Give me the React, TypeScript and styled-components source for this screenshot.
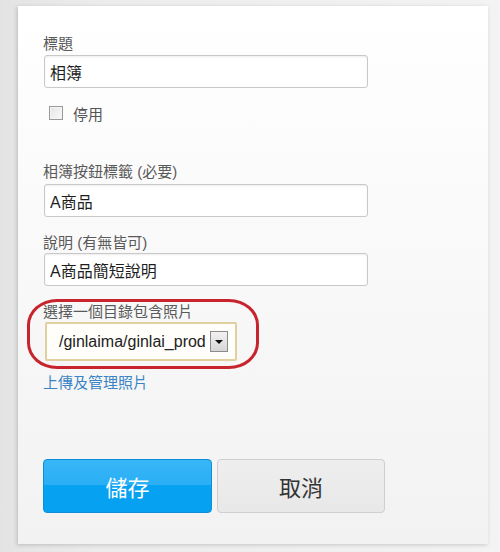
import styled, { createGlobalStyle } from "styled-components";

const GlobalStyle = createGlobalStyle`
  html, body {
    margin: 0;
    padding: 0;
  }
  body {
    width: 500px;
    height: 552px;
    overflow: hidden;
    background: linear-gradient(90deg, #e3e3e3 0%, #ececec 20%, #f3f3f3 100%);
    font-family: "Liberation Sans", "Noto Sans CJK TC", sans-serif;
  }
`;

const Page = styled.div`
  padding: 6px 12px 0 18px;
`;

const Panel = styled.form`
  box-sizing: border-box;
  width: 470px;
  height: 538px;
  padding: 29px 0 0 25px;
  display: flex;
  flex-direction: column;
  align-items: flex-start;
  background: linear-gradient(180deg, #ffffff 0%, #f9f9f9 45%, #f2f2f2 100%);
  box-shadow: -1px 1px 4px rgba(0, 0, 0, 0.18);
`;

const Label = styled.label<{ $top: number }>`
  display: block;
  margin-top: ${(p) => p.$top}px;
  font-size: 15px;
  line-height: 18px;
  color: #5a5a5a;
`;

const TextInput = styled.input<{ $top: number }>`
  box-sizing: border-box;
  width: 324px;
  height: 33px;
  margin: ${(p) => p.$top}px 0 0 1px;
  padding: 0 5px;
  font-family: "Liberation Sans", "Noto Sans CJK TC", sans-serif;
  font-size: 16px;
  color: #1e1e1e;
  background: #fff;
  border: 1px solid #c9c9c9;
  border-radius: 3px;
  box-shadow: inset 0 1px 2px rgba(0, 0, 0, 0.08);
  outline: none;
`;

const CheckRow = styled.div`
  display: flex;
  align-items: center;
  gap: 10px;
  margin: 16px 0 0 6px;
  height: 18px;
  font-size: 15px;
  color: #555;
`;

const Box = styled.span`
  box-sizing: border-box;
  width: 14px;
  height: 14px;
  border: 1px solid #9a9a9a;
  background: linear-gradient(135deg, #e4e4e4, #fafafa);
  box-shadow: inset 0 0 0 1px #f4f4f4;
`;

const Circled = styled.div`
  position: relative;
  margin-top: 17px;
  &::after {
    content: "";
    position: absolute;
    left: -16px;
    top: -4px;
    width: 232px;
    height: 70px;
    box-sizing: border-box;
    border: 3px solid #c8242e;
    border-radius: 30px / 26px;
    pointer-events: none;
  }
`;

const SelectBox = styled.div`
  box-sizing: border-box;
  display: flex;
  align-items: center;
  justify-content: space-between;
  width: 192px;
  height: 39px;
  margin: 1px 0 0 2px;
  padding: 0 7px 0 12px;
  border: 2px solid #e2cf9e;
  border-radius: 2px;
  background: #fffefb;
  font-size: 16px;
  color: #222;
`;

const ArrowButton = styled.span`
  box-sizing: border-box;
  display: flex;
  align-items: center;
  justify-content: center;
  width: 18px;
  height: 21px;
  border: 1px solid #8c8c8c;
  background: linear-gradient(180deg, #f2f2f2, #d6d6d6);
`;

const Arrow = styled.span`
  width: 0;
  height: 0;
  border-left: 4px solid transparent;
  border-right: 4px solid transparent;
  border-top: 4px solid #111;
  margin-top: 1px;
`;

const ManageLink = styled.a`
  display: block;
  margin-top: 13px;
  font-size: 15px;
  line-height: 18px;
  color: #3a84c6;
  text-decoration: none;
`;

const Actions = styled.div`
  display: flex;
  gap: 5px;
  margin-top: 67px;
`;

const Button = styled.button<{ $primary?: boolean }>`
  box-sizing: border-box;
  width: ${(p) => (p.$primary ? 169 : 168)}px;
  height: 54px;
  border-radius: 4px;
  font-family: "Liberation Sans", "Noto Sans CJK TC", sans-serif;
  font-size: 22px;
  cursor: pointer;
  color: ${(p) => (p.$primary ? "#fff" : "#333")};
  border: 1px solid ${(p) => (p.$primary ? "#0b90d8" : "#cfcfcf")};
  background: ${(p) =>
    p.$primary
      ? "linear-gradient(180deg, #38b6f7 0%, #2aaef5 48%, #08a2f2 48%, #06a0f0 100%)"
      : "linear-gradient(180deg, #eeeeee, #e8e8e8)"};
`;

export default function App() {
  return (
    <Page>
      <GlobalStyle />
      <Panel onSubmit={(e) => e.preventDefault()}>
        <Label $top={0}>標題</Label>
        <TextInput $top={2} defaultValue="相簿" />
        <CheckRow>
          <Box />
          <span>停用</span>
        </CheckRow>

        <Label $top={41}>相簿按鈕標籤 (必要)</Label>
        <TextInput $top={3} defaultValue="A商品" />

        <Label $top={17}>說明 (有無皆可)</Label>
        <TextInput $top={1} defaultValue="A商品簡短說明" />

        <Circled>
          <Label $top={0}>選擇一個目錄包含照片</Label>
          <SelectBox>
            <span>/ginlaima/ginlai_prod</span>
            <ArrowButton>
              <Arrow />
            </ArrowButton>
          </SelectBox>
        </Circled>

        <ManageLink href="#">上傳及管理照片</ManageLink>

        <Actions>
          <Button $primary type="submit">儲存</Button>
          <Button type="button">取消</Button>
        </Actions>
      </Panel>
    </Page>
  );
}
